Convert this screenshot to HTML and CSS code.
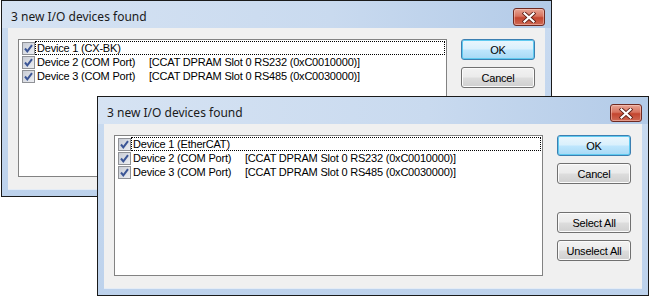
FILE: index.html
```html
<!DOCTYPE html>
<html lang="en">
<head>
    <meta charset="UTF-8">
    <title>3 new I/O devices found</title>
    <link rel="stylesheet" href="styles.css">
</head>
<body>

<div class="desktop">

    <div class="window back">
        <div class="titlebar">
            <span class="title">3 new I/O devices found</span>
            <button class="close-btn" aria-label="Close">
                <svg width="14" height="11" viewBox="0 0 14 11">
                    <path d="M2.5 1.5l9 8M11.5 1.5l-9 8" stroke="#5a1d14" stroke-width="3.8" stroke-linecap="square"/>
                    <path d="M2.5 1.5l9 8M11.5 1.5l-9 8" stroke="#ffffff" stroke-width="2.2" stroke-linecap="square"/>
                </svg>
            </button>
        </div>
        <div class="frame">
            <div class="client">
                <div class="device-list">
                    <div class="item">
                        <span class="check"><svg viewBox="0 0 11 11"><path d="M2 5.5l2.3 2.8L9 2.2"/></svg></span>
                        <span class="label focus"><span class="name">Device 1 (CX-BK)</span></span>
                    </div>
                    <div class="item">
                        <span class="check"><svg viewBox="0 0 11 11"><path d="M2 5.5l2.3 2.8L9 2.2"/></svg></span>
                        <span class="label"><span class="name">Device 2 (COM Port)</span><span>[CCAT DPRAM Slot 0 RS232 (0xC0010000)]</span></span>
                    </div>
                    <div class="item">
                        <span class="check"><svg viewBox="0 0 11 11"><path d="M2 5.5l2.3 2.8L9 2.2"/></svg></span>
                        <span class="label"><span class="name">Device 3 (COM Port)</span><span>[CCAT DPRAM Slot 0 RS485 (0xC0030000)]</span></span>
                    </div>
                </div>
                <div class="buttons">
                    <button class="btn default">OK</button>
                    <button class="btn">Cancel</button>
                </div>
            </div>
        </div>
    </div>

    <div class="window front">
        <div class="titlebar">
            <span class="title">3 new I/O devices found</span>
            <button class="close-btn" aria-label="Close">
                <svg width="14" height="11" viewBox="0 0 14 11">
                    <path d="M2.5 1.5l9 8M11.5 1.5l-9 8" stroke="#5a1d14" stroke-width="3.8" stroke-linecap="square"/>
                    <path d="M2.5 1.5l9 8M11.5 1.5l-9 8" stroke="#ffffff" stroke-width="2.2" stroke-linecap="square"/>
                </svg>
            </button>
        </div>
        <div class="frame">
            <div class="client">
                <div class="device-list">
                    <div class="item">
                        <span class="check"><svg viewBox="0 0 11 11"><path d="M2 5.5l2.3 2.8L9 2.2"/></svg></span>
                        <span class="label focus"><span class="name">Device 1 (EtherCAT)</span></span>
                    </div>
                    <div class="item">
                        <span class="check"><svg viewBox="0 0 11 11"><path d="M2 5.5l2.3 2.8L9 2.2"/></svg></span>
                        <span class="label"><span class="name">Device 2 (COM Port)</span><span>[CCAT DPRAM Slot 0 RS232 (0xC0010000)]</span></span>
                    </div>
                    <div class="item">
                        <span class="check"><svg viewBox="0 0 11 11"><path d="M2 5.5l2.3 2.8L9 2.2"/></svg></span>
                        <span class="label"><span class="name">Device 3 (COM Port)</span><span>[CCAT DPRAM Slot 0 RS485 (0xC0030000)]</span></span>
                    </div>
                </div>
                <div class="buttons">
                    <button class="btn default">OK</button>
                    <button class="btn">Cancel</button>
                    <button class="btn spaced">Select All</button>
                    <button class="btn">Unselect All</button>
                </div>
            </div>
        </div>
    </div>

</div>

</body>
</html>
```

FILE: styles.css
```css
* {
    box-sizing: border-box;
}

body {
    margin: 0;
    background: #ffffff;
    font-family: 'Liberation Sans', Arial, sans-serif;
}

.desktop {
    position: relative;
    width: 650px;
    height: 297px;
    overflow: hidden;
}

/* windows sit on the desktop at their own places */
.window {
    position: absolute;
    display: flex;
    flex-direction: column;
    border: 1px solid #1a1a1a;
    background: #c2d5ed;
}

.window.back {
    left: 1px;
    top: 0;
    width: 551px;
    height: 197px;
}

.window.front {
    left: 97px;
    top: 96px;
    width: 552px;
    height: 200px;
}

.titlebar {
    height: 27px;
    flex: none;
    display: flex;
    justify-content: space-between;
    align-items: flex-start;
    padding: 0 6px 0 9px;
    background: linear-gradient(to right, #d6e3f3, #c9daef 60%, #b3cbe8);
}

.title {
    margin-top: 8px;
    font-family: 'Noto Sans', 'Open Sans', sans-serif;
    font-size: 12px;
    line-height: 16px;
    color: #1a1a1a;
}

.close-btn {
    margin-top: 7px;
    width: 32px;
    height: 18px;
    padding: 0;
    display: flex;
    align-items: center;
    justify-content: center;
    border: 1px solid #6e2a22;
    border-radius: 3px;
    background: linear-gradient(to bottom, #e8a595 0%, #d7735f 45%, #c3452f 55%, #cf6a55 100%);
    box-shadow: inset 0 0 0 1px rgba(255, 220, 210, 0.45);
}

.frame {
    flex: 1;
    display: flex;
    padding: 0 6px 6px 6px;
    background: linear-gradient(to bottom, #c8daf0, #bdd2ec);
}

.client {
    flex: 1;
    display: flex;
    align-items: flex-start;
    padding: 11px 9px 12px 10px;
    background: #f0f0f0;
    border-bottom: 1px solid #e4ecf6;
}

.device-list {
    width: 429px;
    align-self: stretch;
    padding-top: 1px;
    background: #ffffff;
    border: 1px solid #828282;
    font-size: 11px;
    letter-spacing: -0.2px;
    color: #000000;
}

.item {
    display: flex;
    align-items: center;
    height: 14px;
    padding-left: 3px;
    padding-right: 1px;
}

.check {
    width: 13px;
    height: 13px;
    flex: none;
    border: 1px solid #8f9196;
    background: linear-gradient(135deg, #c8ccd5, #eceef2);
    display: flex;
}

.check svg {
    width: 11px;
    height: 11px;
}

.check path {
    fill: none;
    stroke: #3b5596;
    stroke-width: 2;
}

.label {
    flex: 1;
    display: flex;
    height: 14px;
    line-height: 12px;
    padding-left: 1px;
    border: 1px dotted transparent;
    white-space: nowrap;
}

.label.focus {
    border-color: #000000;
}

.name {
    width: 112px;
    flex: none;
}

.buttons {
    width: 74px;
    margin-left: 14px;
    display: flex;
    flex-direction: column;
    gap: 7px;
}

.btn {
    height: 21px;
    padding: 0;
    font-family: 'Liberation Sans', Arial, sans-serif;
    font-size: 11px;
    letter-spacing: -0.2px;
    color: #000000;
    border: 1px solid #707070;
    border-radius: 3px;
    background: linear-gradient(to bottom, #f2f2f2 0%, #ebebeb 48%, #dddddd 52%, #cfcfcf 100%);
    box-shadow: inset 0 0 0 1px #fbfbfb;
}

.btn.default {
    border-color: #3c7fb1;
    background: linear-gradient(to bottom, #eaf6fd 0%, #d9f0fc 48%, #bee6fd 52%, #a7d9f5 100%);
    box-shadow: inset 0 0 0 1px #5fcaf0;
}

.btn.spaced {
    margin-top: 21px;
}
```
